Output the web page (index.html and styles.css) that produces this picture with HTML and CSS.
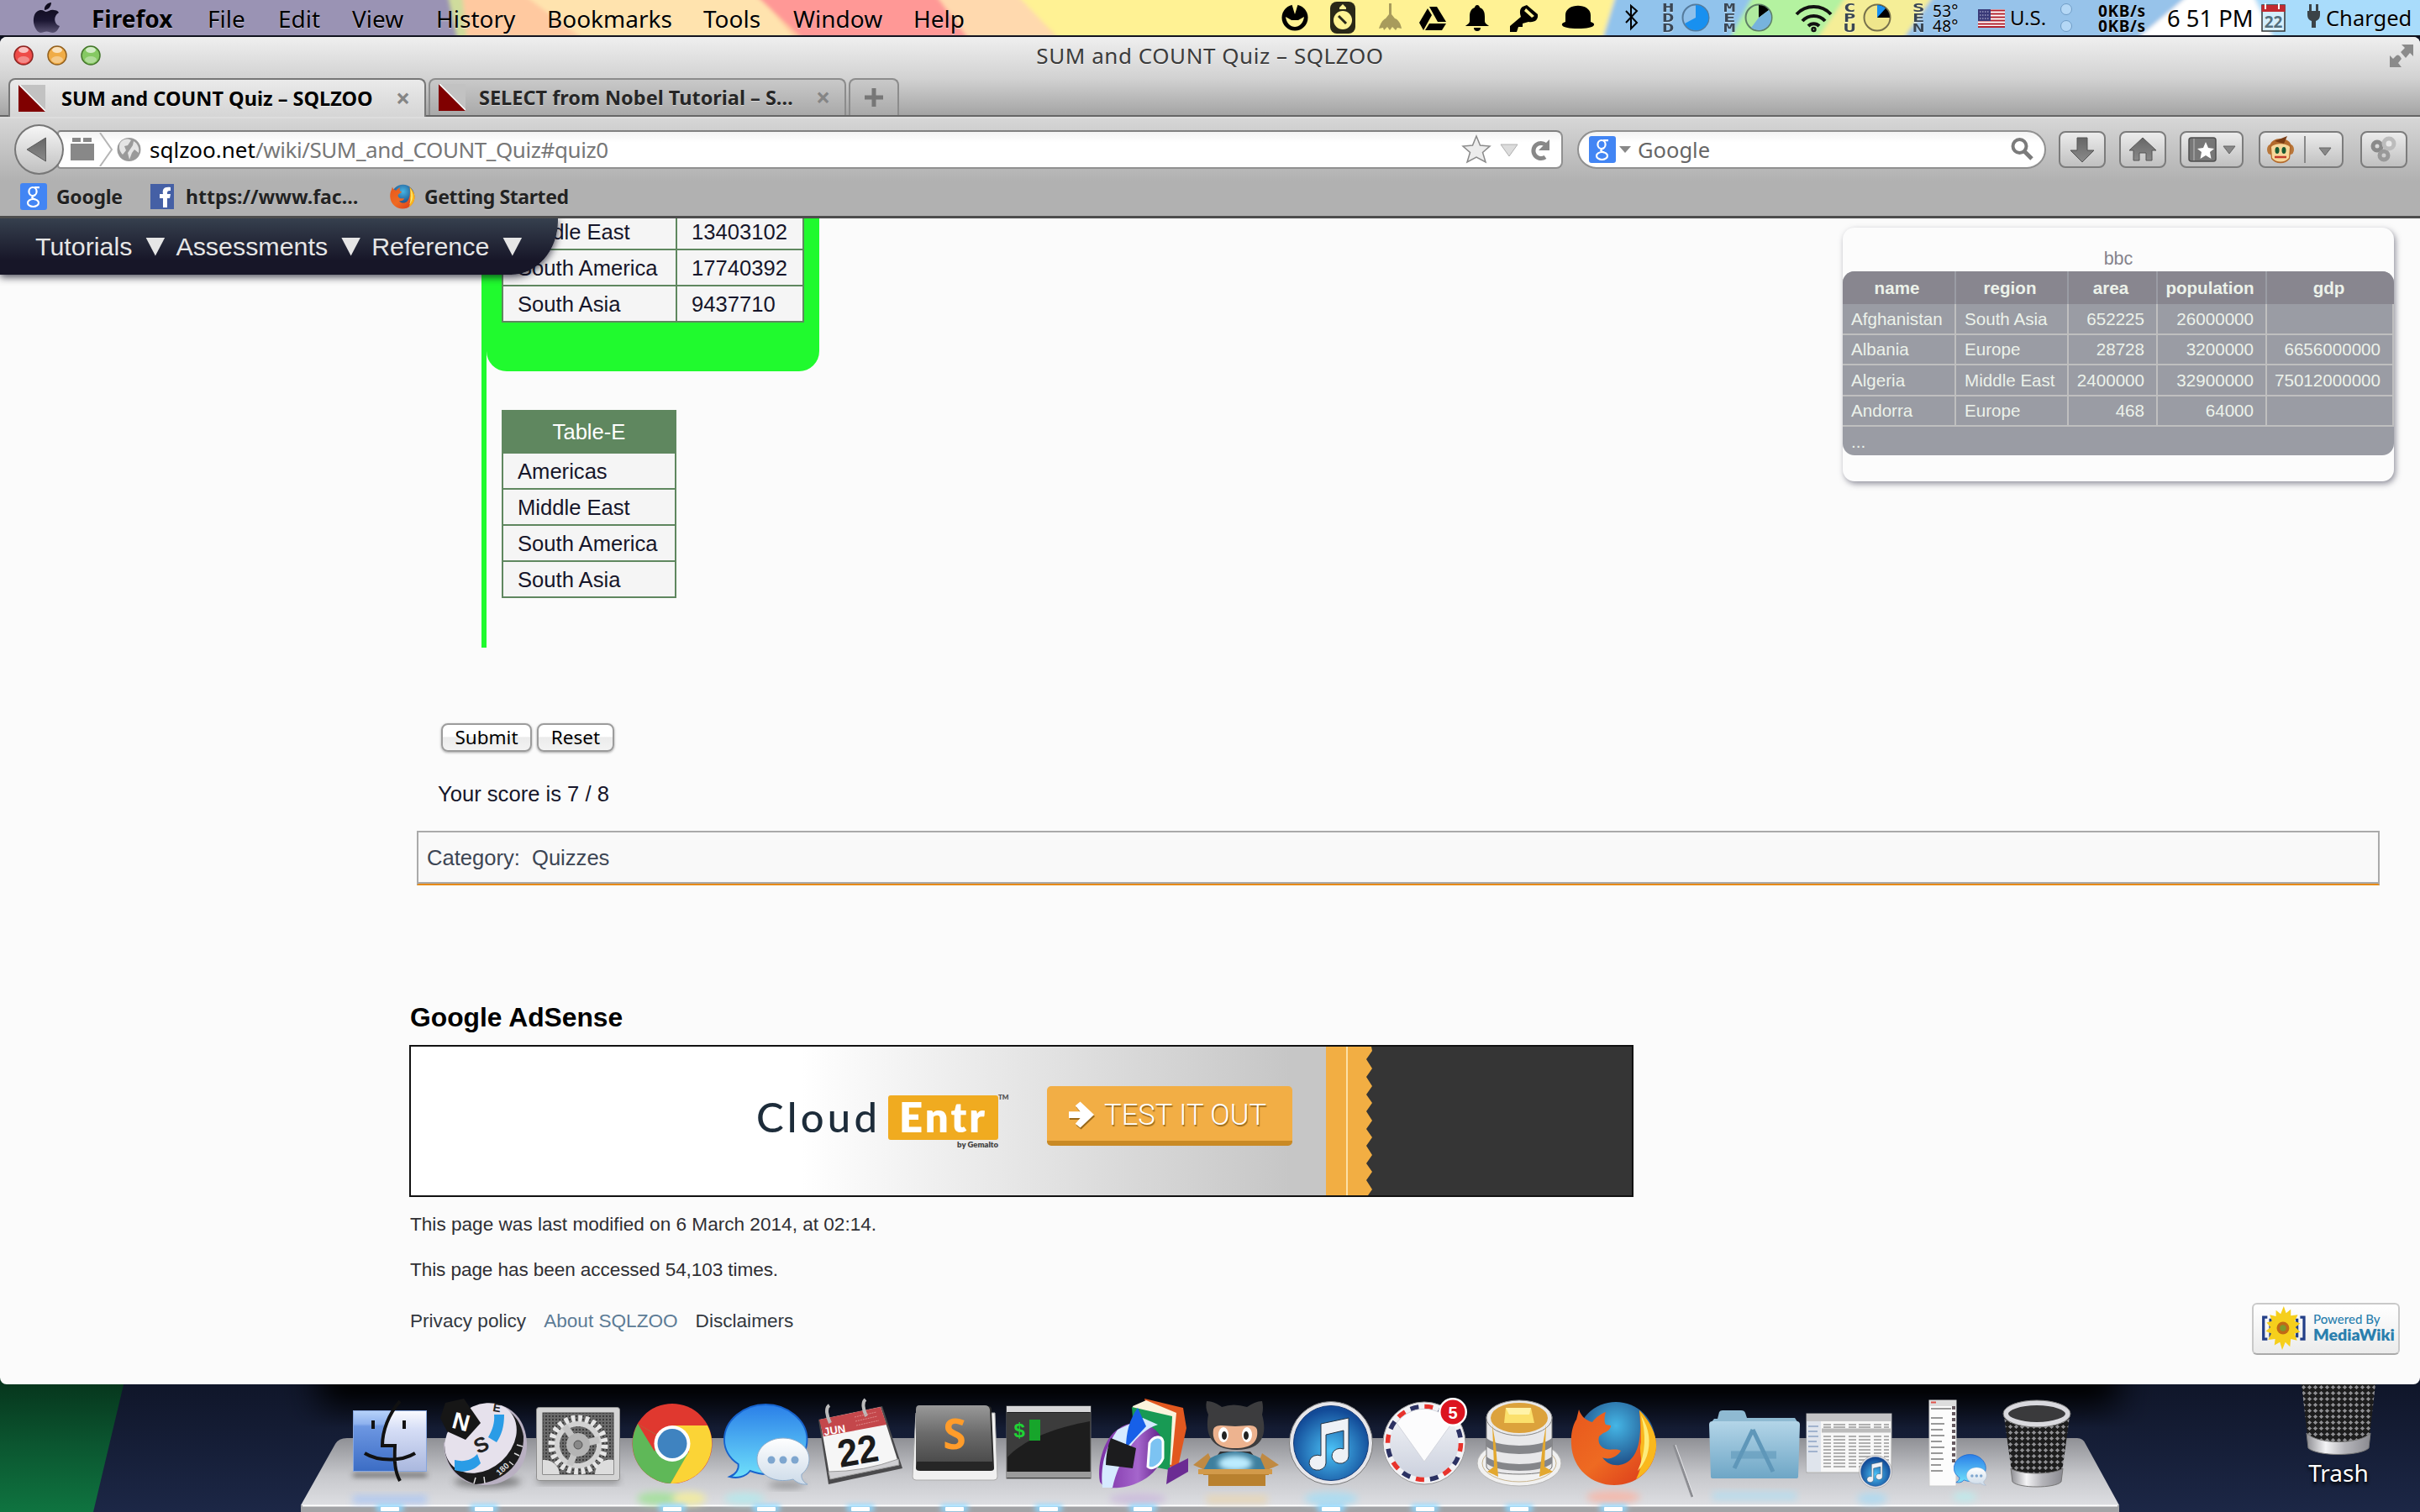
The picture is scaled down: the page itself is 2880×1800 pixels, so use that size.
FILE: index.html
```html
<!DOCTYPE html>
<html lang="en">
<head>
<meta charset="utf-8">
<title>SUM and COUNT Quiz – SQLZOO</title>
<link rel="stylesheet" href="styles.css">
</head>
<body>
<svg class="defs" width="0" height="0">
  <defs>
    <linearGradient id="silver" x1="0" y1="0" x2="1" y2="0"><stop offset="0" stop-color="#8d8d92"/><stop offset=".3" stop-color="#f4f4f6"/><stop offset=".6" stop-color="#b5b5ba"/><stop offset="1" stop-color="#8a8a90"/></linearGradient>
    <linearGradient id="grey" x1="0" y1="0" x2="0" y2="1"><stop offset="0" stop-color="#666"/><stop offset="1" stop-color="#8a8a8a"/></linearGradient>
    <linearGradient id="apple" x1="0" y1="0" x2="0" y2="1"><stop offset="0" stop-color="#0c0918"/><stop offset=".6" stop-color="#1c1733"/><stop offset="1" stop-color="#5b5474"/></linearGradient>
    <linearGradient id="finderL" x1="0" y1="0" x2="0" y2="1"><stop offset="0" stop-color="#b9d4fa"/><stop offset=".22" stop-color="#8fb2ee"/><stop offset=".26" stop-color="#6d97e2"/><stop offset="1" stop-color="#3b6cc4"/></linearGradient>
    <linearGradient id="finderR" x1="0" y1="0" x2="0" y2="1"><stop offset="0" stop-color="#fbfbff"/><stop offset=".3" stop-color="#d6def6"/><stop offset="1" stop-color="#a9b7de"/></linearGradient>
    <linearGradient id="bubble" x1="0" y1="0" x2="0" y2="1"><stop offset="0" stop-color="#2a7fe8"/><stop offset="1" stop-color="#6fe0fb"/></linearGradient>
    <linearGradient id="bubble2" x1="0" y1="0" x2="0" y2="1"><stop offset="0" stop-color="#fff"/><stop offset="1" stop-color="#cddbe9"/></linearGradient>
    <linearGradient id="letter" x1="0" y1="0" x2="0" y2="1"><stop offset="0" stop-color="#f4f5f8"/><stop offset="1" stop-color="#ccd1de"/></linearGradient>
    <radialGradient id="tunes" cx=".5" cy=".6" r=".55"><stop offset="0" stop-color="#4cc4f8"/><stop offset="1" stop-color="#124a97"/></radialGradient>
    <radialGradient id="foxblue" cx=".5" cy=".3" r=".7"><stop offset="0" stop-color="#45b6e6"/><stop offset="1" stop-color="#122a66"/></radialGradient>
    <linearGradient id="foxfur" x1="0" y1="0" x2="1" y2="1"><stop offset="0" stop-color="#e8571c"/><stop offset=".5" stop-color="#ee6a22"/><stop offset="1" stop-color="#d9361a"/></linearGradient>
    <linearGradient id="folder" x1="0" y1="0" x2="0" y2="1"><stop offset="0" stop-color="#b3d5e8"/><stop offset="1" stop-color="#6ea6c6"/></linearGradient>
    <linearGradient id="train" x1="0" y1="0" x2="1" y2="0"><stop offset="0" stop-color="#7b2fa5"/><stop offset=".6" stop-color="#a566cc"/><stop offset="1" stop-color="#5b1a83"/></linearGradient>
    <linearGradient id="sublime" x1="0" y1="0" x2="0" y2="1"><stop offset="0" stop-color="#999"/><stop offset=".5" stop-color="#6b6b6b"/><stop offset="1" stop-color="#4c4c4c"/></linearGradient>
    <pattern id="mesh" width="7" height="7" patternUnits="userSpaceOnUse"><rect width="7" height="7" fill="#1c1c1c"/><path d="M0 3.500L3.500 0L7 3.500L3.500 7Z" fill="#8f8f92" stroke="#1a1a1a" stroke-width="1.200"/></pattern>
    <pattern id="dots" width="4" height="4" patternUnits="userSpaceOnUse"><rect width="4" height="4" fill="#6b6b6b"/><circle cx="2" cy="2" r="1" fill="#2c2c2c"/></pattern>
    <filter id="soft" x="-50%" y="-50%" width="200%" height="200%"><feGaussianBlur stdDeviation="4"/></filter>
    <filter id="glow" x="-80%" y="-200%" width="260%" height="500%"><feGaussianBlur stdDeviation="3"/></filter>
    <filter id="melt"><feGaussianBlur stdDeviation="2.5"/></filter>
    <symbol id="lamp" viewBox="0 0 112 140"><rect x="40" y="131" width="32" height="9" fill="#8fd8ff" filter="url(#glow)"/><rect x="45" y="134" width="22" height="5" rx="1" fill="#fff"/></symbol>
    <symbol id="firefox" viewBox="0 0 104 102">
      <circle cx="54" cy="49" r="47" fill="url(#foxblue)"/>
      <path d="M82 12C98 28 105 48 101 62C97 84 78 101 52 101C26 101 2 82 1 52C0 38 4 27 7 23L10 11C13 20 19 24 26 26C30 20 38 15 42 14C40 20 40 26 42 29L48 30C48 34 45 37 39 39L34 43C32 51 36 56 42 58C48 60 54 57 60 60C56 67 46 72 38 68C46 80 62 80 72 70C84 58 84 34 82 12Z" fill="url(#foxfur)"/>
      <path d="M82 12C98 28 105 48 101 62C98 77 89 88 78 94C90 70 80 66 84 50C84 34 84 24 82 12Z" fill="#f9b81d"/>
      <path d="M84 18C94 34 96 50 91 66C88 74 84 80 80 84C90 62 90 40 84 18Z" fill="#fdec7a"/>
    </symbol>
    <symbol id="itunes" viewBox="0 0 100 102">
      <circle cx="50" cy="51" r="49.5" fill="#e6e6ea" stroke="#777" stroke-width="1"/>
      <circle cx="50" cy="51" r="44.5" fill="url(#tunes)" stroke="#173c78"/>
      <path d="M38 28L71 21V67a10 9 0 1 1-6-9V36L44 41V75a10 9 0 1 1-6-9Z" fill="#eef1f6" stroke="#234" stroke-width="1"/>
    </symbol>
    <symbol id="messages" viewBox="0 0 104 98">
      <path d="M54 1C82 1 107 20 107 43S82 84 54 84C46 84 40 82 34 80C28 88 16 89 8 87C16 84 20 78 19 72C7 65 1 54 1 43C1 20 26 1 54 1Z" transform="scale(.93 1)" fill="url(#bubble)" stroke="#1763cd" stroke-width="2"/>
      <path d="M71 41C88 41 102 52 102 66C102 74 98 80 93 84C92 90 96 94 100 96C92 97 86 93 83 90C60 96 40 84 40 66C40 52 54 41 71 41Z" fill="url(#bubble2)" stroke="#8eaccb" stroke-width="1"/>
      <circle cx="57" cy="67" r="4.5" fill="#7ea6cf"/><circle cx="71" cy="67" r="4.5" fill="#7ea6cf"/><circle cx="85" cy="67" r="4.5" fill="#7ea6cf"/>
    </symbol>
    <symbol id="goog" viewBox="0 0 32 32"><rect width="32" height="32" rx="3" fill="#4285f4"/><g fill="none" stroke="#fff" stroke-width="2.2"><ellipse cx="15" cy="10" rx="4.6" ry="5"/><path d="M17 5.200H23M18 14C12 17 14 18 18 19.500"/><ellipse cx="15.500" cy="23.500" rx="6.500" ry="4.500"/></g></symbol>
    <symbol id="sqlzoo" viewBox="0 0 32 32"><rect width="32" height="32" fill="#c2c2c2"/><path d="M0 0L32 32H0Z" fill="#800000"/><path d="M1 0L32 31" stroke="#fff" stroke-width="1.500"/></symbol>
  </defs>
</svg>

<header class="menubar">
  <svg class="menubar-wallpaper" viewBox="0 0 2880 44" preserveAspectRatio="none">
    <rect width="2880" height="44" fill="#9a93b4"/>
    <g filter="url(#melt)">
      <path d="M532 -9H570V53H545Z" fill="#cfdc9c"/>
      <path d="M550 -9H2880V53H556Z" fill="#ffc9a0"/>
      <path d="M620 -9H900L950 53H700Z" fill="#ffe3ae"/>
      <path d="M896 -9H1112L1156 53H960Z" fill="#ff9896"/>
      <path d="M1112 -9H1210L1262 53H1156Z" fill="#ffd9ae"/>
      <path d="M1208 -9H1926L1906 53H1264Z" fill="#fff294"/>
      <path d="M1924 -9H2090L2058 53H1906Z" fill="#91c3ec"/>
      <path d="M2088 -9H2200L2160 53H2056Z" fill="#b4f2a0"/>
      <path d="M2200 -9H2304L2262 53H2160Z" fill="#f5ee97"/>
      <path d="M2304 -9H2608L2538 53H2262Z" fill="#97c3ea"/>
      <path d="M2608 -9H2680L2708 53H2538Z" fill="#fff"/>
      <path d="M2680 -9H2900V53H2708Z" fill="#a9dcfb"/>
    </g>
  </svg>
  <svg class="apple" viewBox="0 0 110 44"><path fill="url(#apple)" d="M61 3C61 8 57 12 53 12C52 7 57 3 61 3ZM55 14C58 14 60 11 64 12C67 12 69 13 70 15C63 19 64 29 71 31C69 36 66 39 63 39C60 39 58 37.500 55.500 37.500C53 37.500 51 39 48 39C43 38 39 29 40 22C41 14 46 12 49 12C52 12 53 14 55 14Z"/></svg>
  <b>Firefox</b><span>File</span><span>Edit</span><span>View</span><span>History</span><span>Bookmarks</span><span>Tools</span><span>Window</span><span>Help</span>
  <svg viewBox="0 0 58 44"><circle cx="21" cy="21" r="15.500"/><path d="M17 4L21 17L25 4Z" fill="#fff294"/><path d="M10 20L17 24H25L32 20C31 28 26 32 21 32S11 28 10 20Z" fill="#fff294"/></svg>
  <svg viewBox="0 0 58 44"><rect x="5" y="2" width="30" height="38" rx="8" fill="#2a2818"/><circle cx="20" cy="24" r="11" fill="#fff294"/><path d="M16 9L20 5L24 9V11H16Z" fill="#fff294"/><path d="M15 19L24 28" stroke="#2a2818" stroke-width="3"/></svg>
  <svg viewBox="0 0 48 44" fill="#a89b5c"><path d="M17 4H20V17L24 22C28 23 31 28 32 34L27 33L25 36L21 32L18 36L15 32L11 36L10 33L5 34C7 28 9 24 13 22L17 17Z"/></svg>
  <svg viewBox="0 0 55 44"><path d="M17 8H26L37 26H27ZM15 10L20 18L10 36L5 27ZM17 28H37L32 36H12Z"/></svg>
  <svg viewBox="0 0 53 44"><path d="M19 6C21 6 22 8 22 9C27 11 28 15 28 20V25C28 28 31 29 33 31H5C7 29 10 28 10 25V20C10 15 11 11 16 9C16 8 17 6 19 6ZM15 33H23A4 4 0 0 1 15 33Z"/></svg>
  <svg viewBox="0 0 60 44"><path fill-rule="evenodd" d="M20 8L25 6L38 17C39 24 34 27 27 26L20 28V32L15 32L13 38H5V31L18 20C16 14 17 10 20 8ZM24 10L22 13L31 21L34 19Z"/></svg>
  <svg viewBox="0 0 78 44"><path d="M11 26V18C11 3 41 3 41 18V26C48 28 48 34 26 34S4 28 11 26Z"/></svg>
  <svg viewBox="0 0 48 44" fill="none" stroke="#000" stroke-width="2"><path d="M5 13L18 27L11 34V7L18 13L5 27"/></svg>
  <span class="stack">H<br>D<br>D</span>
  <svg viewBox="0 0 51 44"><circle cx="18" cy="21" r="15.500" fill="#8fc0ea" stroke="#557b9c" stroke-width="2"/><path d="M18 21V6A15 15 0 1 1 5 28Z" fill="#1890f0"/></svg>
  <span class="stack">M<br>E<br>M</span>
  <svg viewBox="0 0 59 44"><circle cx="18" cy="21" r="15.500" fill="#b0ea9f" stroke="#5e7e66" stroke-width="2"/><path d="M18 21V6A15 15 0 0 1 30 12Z"/><path d="M18 21L30 12A15 15 0 0 1 9 33Z" fill="#77b3dd"/></svg>
  <svg viewBox="0 0 60 44" fill="none" stroke="#111" stroke-width="4"><path d="M4 17A28 28 0 0 1 45 17M11 25A18 18 0 0 1 38 25M18 31A9 9 0 0 1 31 31"/><circle cx="24.500" cy="35" r="1.200"/></svg>
  <span class="stack">C<br>P<br>U</span>
  <svg viewBox="0 0 60 44"><circle cx="18" cy="21" r="15.500" fill="#efe68c" stroke="#77714c" stroke-width="2"/><path d="M18 21V6A15 15 0 0 1 33 21Z"/><path d="M18 21V6A15 15 0 0 1 28 10Z" fill="#1890f0"/></svg>
  <span class="stack">S<br>E<br>N</span>
  <span class="temps"><span>53°</span><span>48°</span></span>
  <svg viewBox="0 0 40 44"><rect x="2" y="11" width="32" height="22" fill="#fff"/><path d="M2 12.500H34M2 16.500H34M2 20.500H34M2 24.500H34M2 28.500H34M2 32H34" stroke="#b2222f" stroke-width="2"/><rect x="2" y="11" width="15" height="14" fill="#3a3a78"/><path d="M4 14H16M4 18H16M4 22H16" stroke="#c9c9e4" stroke-dasharray="1.500 1.500"/></svg>
  <span class="us">U.S.</span>
  <svg viewBox="0 0 46 44" fill="#b5d8f6" stroke="#6f9cc6"><circle cx="9" cy="11" r="6.500"/><circle cx="9" cy="31" r="6.500"/></svg>
  <b class="temps net"><span>0KB/s</span><span>0KB/s</span></b>
  <span class="clock">6 51 PM</span>
  <svg viewBox="0 0 53 44"><rect x="3" y="6" width="27" height="31" fill="#d3eefc" stroke="#333" stroke-width="1.500"/><rect x="2.500" y="6" width="28" height="8" fill="#c22a30"/><path d="M7 4V11M23 4V11" stroke="#fff" stroke-width="2"/><text x="16.500" y="33" text-anchor="middle" class="caltext">22</text></svg>
  <svg viewBox="0 0 25 44" fill="#3b4347"><path d="M6 5H9V13H14V5H17V13H19V17C19 22 17 24 14 25V33H9V25C6 24 4 22 4 17V13H6Z"/></svg>
  <span class="charged">Charged</span>
</header>

<main class="window">
  <div class="titlebar">
    <svg class="lights" viewBox="0 0 130 30"><g stroke-width="1.500"><circle cx="28" cy="15" r="11" fill="#ee4b48" stroke="#8c2522"/><circle cx="68" cy="15" r="11" fill="#f0ac46" stroke="#92601f"/><circle cx="108" cy="15" r="11" fill="#86c963" stroke="#44762b"/></g><g fill="#fff" opacity=".65"><ellipse cx="28" cy="8.500" rx="6" ry="3.500"/><ellipse cx="68" cy="8.500" rx="6" ry="3.500"/><ellipse cx="108" cy="8.500" rx="6" ry="3.500"/></g><g fill="#fff" opacity=".35"><ellipse cx="28" cy="20" rx="7" ry="4"/><ellipse cx="68" cy="20" rx="7" ry="4"/><ellipse cx="108" cy="20" rx="7" ry="4"/></g></svg>
    <div class="title">SUM and COUNT Quiz – SQLZOO</div>
    <svg class="expand" viewBox="0 0 130 30" fill="#8b8b8b"><path d="M108 1H122V15L118 11L113 17L107 10L112 5ZM94 28V14L98 18L102 14C105 12 107 16 108 18L104 23L108 28Z"/></svg>
  </div>
  <div class="tabs">
    <div class="tab active"><svg class="fav"><use href="#sqlzoo"/></svg><b>SUM and COUNT Quiz – SQLZOO</b><i>×</i></div>
    <div class="tab"><svg class="fav"><use href="#sqlzoo"/></svg><b>SELECT from Nobel Tutorial – S…</b><i>×</i></div>
    <div class="tab plus"><svg viewBox="0 0 22 22"><path d="M8.500 0h5v8.500h8.500v5h-8.500v8.500h-5v-8.500H0v-5h8.500Z" fill="#777"/></svg></div>
  </div>
  <div class="toolbar">
    <div class="back"><svg viewBox="0 0 60 60"><path d="M14 30L38 15V45Z" fill="url(#grey)" stroke="#555"/></svg></div>
    <div class="urlbar">
      <svg class="idbox" viewBox="0 0 96 40"><path d="M6 13H34V33H6ZM8 6H18V11H8ZM21 6H31V11H21Z" fill="#888"/><path d="M41 0L55 20L41 40" fill="none" stroke="#b5b5b5" stroke-width="2"/><circle cx="75.500" cy="20" r="14" fill="#9a9a9a"/><path d="M65 12C69 6 76 7 78 9L74 15L70 16L72 21L68 26C64 22 63 17 65 12ZM81 10C86 13 88 18 87 24L82 20L79 24L76 32L74 24L80 15Z" fill="#e4e4e4"/></svg>
      <span class="url"><em>sqlzoo.net</em>/wiki/SUM_and_COUNT_Quiz#quiz0</span>
      <svg class="urlicons" viewBox="0 0 130 40"><path d="M29 4L33.500 15L45 16L36.500 23.500L40 35L29 29L18 35L21.500 23.500L13 16L24.500 15Z" fill="#ececec" stroke="#8a8a8a" stroke-width="1.500"/><path d="M58 14H78L68 28Z" fill="#dcdcdc" stroke="#b0b0b0"/><path d="M113 16A9 9 0 1 0 111 29" fill="none" stroke="#888" stroke-width="5"/><path d="M116 8V21H103Z" fill="#888"/></svg>
    </div>
    <div class="search"><svg class="g32"><use href="#goog"/></svg><svg class="tri" viewBox="0 0 14 8"><path d="M0 0H14L7 8Z" fill="#888"/></svg><span>Google</span><svg class="mag" viewBox="0 0 28 28"><circle cx="10.500" cy="10" r="8" fill="none" stroke="#7b7b7b" stroke-width="4"/><path d="M16 16L25 25" stroke="#7b7b7b" stroke-width="5"/></svg></div>
    <div class="tool"><svg viewBox="0 0 56 44"><path d="M22 8H34V23H42L28 37L14 23H22Z" fill="url(#grey)" stroke="#555"/></svg></div>
    <div class="tool"><svg viewBox="0 0 56 44"><path d="M28 8L44 23H39V35H32V26H24V35H17V23H12Z" fill="url(#grey)" stroke="#555"/></svg></div>
    <div class="tool book"><svg viewBox="0 0 76 44"><rect x="11" y="8" width="32" height="28" rx="3" fill="#777" stroke="#4f4f4f" stroke-width="1.500"/><path d="M17 9V35" stroke="#999" stroke-width="2"/><path d="M31 13L34 20L41 21L36 25L37.500 33L31 29L24.500 33L26 25L21 21L28 20Z" fill="#fff"/><path d="M52 18H66L59 27Z" fill="#888" stroke="#666"/></svg></div>
    <div class="tool monkey"><svg viewBox="0 0 101 44"><ellipse cx="14" cy="22" rx="4" ry="6" fill="#b9773a"/><ellipse cx="38" cy="22" rx="4" ry="6" fill="#b9773a"/><path d="M13 18C15 6 37 6 39 18L37 33C32 40 20 40 15 33Z" fill="#b36a2c"/><path d="M15 19C19 14 33 14 37 19L36 32C31 38 21 38 16 32Z" fill="#f7d79a"/><path d="M19 12L34 6L30 15Z" fill="#7a3c14"/><ellipse cx="22" cy="23" rx="2.500" ry="4" fill="#195a32"/><ellipse cx="30" cy="23" rx="2.500" ry="4" fill="#195a32"/><path d="M19 31H33" stroke="#c43c2c" stroke-width="2.500"/><path d="M55 6V38" stroke="#888" stroke-width="2"/><path d="M72 20H86L79 29Z" fill="#888" stroke="#666"/></svg></div>
    <div class="tool last"><svg viewBox="0 0 56 44"><g fill="none" stroke-width="5"><circle cx="20" cy="18" r="5" stroke="#8a8a8a"/><circle cx="28" cy="29" r="5" stroke="#999"/><circle cx="34" cy="15" r="6" stroke="#bcbcbc" fill="#e8e8e8"/></g></svg></div>
  </div>
  <div class="bookmarks">
    <svg class="g32"><use href="#goog"/></svg><b class="bk1">Google</b>
    <svg class="fb" viewBox="0 0 28 30"><rect width="28" height="30" fill="#4560a5"/><path d="M15 28V17H11V12H15C14 6 16 3 24 4V8C20 8 20 9 20 12H24L23 17H20V28Z" fill="#fff"/></svg><b class="bk2">https://www.fac…</b>
    <svg class="ffx"><use href="#firefox"/></svg><b class="bk3">Getting Started</b>
  </div>

  <section class="page">
    <nav class="sitenav"><span>Tutorials</span><i></i><span>Assessments</span><i></i><span>Reference</span><i></i></nav>
    <aside class="card">
      <div class="caption">bbc</div>
      <table>
        <colgroup><col class="c1"><col class="c2"><col class="c3"><col class="c4"><col class="c5"></colgroup>
        <tr><th>name</th><th>region</th><th>area</th><th>population</th><th>gdp</th></tr>
        <tr><td>Afghanistan</td><td>South Asia</td><td class="n">652225</td><td class="n">26000000</td><td></td></tr>
        <tr><td>Albania</td><td>Europe</td><td class="n">28728</td><td class="n">3200000</td><td class="n">6656000000</td></tr>
        <tr><td>Algeria</td><td>Middle East</td><td class="n">2400000</td><td class="n">32900000</td><td class="n">75012000000</td></tr>
        <tr><td>Andorra</td><td>Europe</td><td class="n">468</td><td class="n">64000</td><td></td></tr>
        <tr><td colspan="5" class="more">...</td></tr>
      </table>
    </aside>
    <div class="answers">
      <div class="chosen">
        <table class="result two">
          <tr><td>Middle East</td><td>13403102</td></tr>
          <tr><td>South America</td><td>17740392</td></tr>
          <tr><td>South Asia</td><td>9437710</td></tr>
        </table>
      </div>
      <table class="result one">
        <tr><th>Table-E</th></tr>
        <tr><td>Americas</td></tr>
        <tr><td>Middle East</td></tr>
        <tr><td>South America</td></tr>
        <tr><td>South Asia</td></tr>
      </table>
    </div>
    <div class="buttons"><button class="submit">Submit</button><button class="reset">Reset</button></div>
    <p class="score">Your score is 7 / 8</p>
    <div class="category"><span>Category:</span><span>Quizzes</span></div>
    <footer class="foot">
      <h2>Google AdSense</h2>
      <div class="ad">
        <div class="brand"><span class="cloud">Cloud</span><span class="entr">Entr<small class="tm">TM</small><small class="by">by Gemalto</small></span></div>
        <div class="cta"><svg viewBox="0 0 32 32"><path d="M0 12H14L8 5L14 0L31 16L14 32L8 27L14 20H0Z" fill="#fff"/></svg><span>TEST IT OUT</span></div>
        <svg class="ribbon" viewBox="0 0 60 177"><rect x="40" width="20" height="177" fill="#353535"/><path d="M0 0H54L55 5L48 15L55 26L48 36L55 47L48 57L55 67L48 77L55 88L48 98L55 108L48 118L55 129L48 139L55 149L48 159L55 170L50 177H0Z" fill="#f2ae43"/><path d="M25 0V177" stroke="#fff0c8" stroke-width="1.500"/></svg>
        <div class="dark"></div>
      </div>
      <p class="f1">This page was last modified on 6 March 2014, at 02:14.</p>
      <p class="f2">This page has been accessed 54,103 times.</p>
      <div class="links"><a>Privacy policy</a><a class="about">About SQLZOO</a><a>Disclaimers</a></div>
    </footer>
    <div class="mw"><svg viewBox="0 0 60 56"><path d="M11 14H6V42H11M53 14H58V42H53M15 16V40M49 16V40" fill="none" stroke="#233f88" stroke-width="3.500"/><path d="M32 0L35 9L41 4L41 12L50 11L46 19L53 22L47 27L53 33L46 35L49 44L41 42L40 52L34 46L30 56L27 46L20 50L21 42L12 43L16 35L9 32L15 27L10 21L17 19L14 11L22 13L22 5L28 10Z" fill="#f6cf1c"/><circle cx="31" cy="28" r="8" fill="#c06a16"/><circle cx="31" cy="28" r="4" fill="#7d9a2c"/></svg><div><span>Powered By</span><b>MediaWiki</b></div></div>
  </section>
</main>

<section class="desktop">
  <svg class="backdrop" viewBox="0 0 2880 160" preserveAspectRatio="none">
    <defs><linearGradient id="navy" x1="0" y1="0" x2="0" y2="1"><stop offset="0" stop-color="#0f1528"/><stop offset="1" stop-color="#1c2746"/></linearGradient><linearGradient id="green" x1="0" y1="0" x2="0" y2="1"><stop offset="0" stop-color="#06331b"/><stop offset=".5" stop-color="#0b5630"/><stop offset="1" stop-color="#0f7440"/></linearGradient>
    <linearGradient id="shade" x1="0" y1="0" x2="0" y2="1"><stop offset="0" stop-color="#020305"/><stop offset=".3" stop-color="#020305" stop-opacity=".85"/><stop offset="1" stop-color="#020305" stop-opacity="0"/></linearGradient>
    <linearGradient id="shelf" x1="0" y1="0" x2="0" y2="1"><stop offset="0" stop-color="#8f9095"/><stop offset=".5" stop-color="#c6c7cb"/><stop offset="1" stop-color="#e3e4e8"/></linearGradient>
    <filter id="wide" x="-5%" y="-100%" width="110%" height="300%"><feGaussianBlur stdDeviation="20 1"/></filter></defs>
    <rect width="2880" height="160" fill="url(#navy)"/>
    <path d="M0 0H149L111 160H0Z" fill="url(#green)"/>
    <path d="M380 0H2520V60H380Z" fill="url(#shade)" filter="url(#wide)"/>
    <path d="M413 72H2472Q2479 72 2482 79L2522 152V160H358V152L399 79Q403 72 413 72Z" fill="url(#shelf)"/>
    <path d="M358 152H2522V160H358Z" fill="#a2a3a6"/><path d="M360 152.500H2520" stroke="#fff" stroke-width="2"/>
  </svg>
  <div class="dock">
    <svg viewBox="0 0 112 140"><rect x="12" y="120" width="88" height="10" fill="#a9c4f4" opacity=".8" filter="url(#soft)"/><rect x="12" y="94" width="88" height="4" fill="#555" filter="url(#glow)"/><rect x="12" y="19" width="88" height="73" fill="url(#finderR)"/><path d="M12 19H62C52 32 47 48 47 61H60C59 72 60 84 62 92H12Z" fill="url(#finderL)"/><rect x="12.500" y="19.500" width="87" height="72" fill="none" stroke="#86a6df"/><path d="M68 8C54 24 47 44 47 61H62C61 80 62 92 68 103M26 70C42 80 70 80 86 70M36 31V41M73 31V41" fill="none" stroke="#111" stroke-width="4"/><use href="#lamp"/></svg>
    <svg viewBox="0 0 112 140"><ellipse cx="60" cy="104" rx="40" ry="7" fill="#333" opacity=".5" filter="url(#soft)"/><path d="M60 11C90 10 106 32 107 58C108 90 84 108 56 108C26 108 8 86 8 58Z" fill="#b9b0c2"/><path d="M64 12C86 14 100 30 103 50C104 78 84 104 46 107C24 100 10 84 9 62Z" fill="#1b1b1c"/><ellipse cx="52" cy="52" rx="47" ry="37" transform="rotate(-42 52 52)" fill="#e6e1ec"/><path d="M68 24H80C80 38 77 48 71 57L61 51C66 42 69 34 68 24ZM21 78C32 81 42 78 48 71L52 82C44 91 32 94 21 90Z" fill="#2a9ce6"/><path d="M4 28L10 10L32 5L52 34L34 54L12 44Z" fill="#161616"/><text x="18" y="41" transform="rotate(15 24 34)" class="cN">N</text><text x="45" y="70" transform="rotate(-25 50 62)" class="cS">S</text><text x="66" y="20" class="cE" transform="rotate(10 68 20)">E</text><path d="M86 80L91 84M92 70L98 73M95 60L102 62M56 98L57 106M46 99L44 106" stroke="#ddd" stroke-width="1.500"/><text x="70" y="94" class="cn" transform="rotate(-42 76 90)">180</text><use href="#lamp"/></svg>
    <svg viewBox="0 0 112 140"><rect x="8" y="98" width="96" height="8" fill="#444" opacity=".5" filter="url(#soft)"/><rect x="6.500" y="15.500" width="99" height="87" rx="3" fill="#d4d4d4" stroke="#8e8e8e"/><rect x="14" y="22" width="84" height="73" fill="url(#dots)" stroke="#444"/><circle cx="56" cy="60" r="31" fill="none" stroke="#e6e6e6" stroke-width="9" stroke-dasharray="4.500 3.615"/><circle cx="56" cy="60" r="25" fill="none" stroke="#d2d2d2" stroke-width="6"/><path d="M56 60L40 38M56 60L81 54M56 60L46 84" stroke="#c4c4c4" stroke-width="8"/><circle cx="56" cy="60" r="14" fill="#b4b4b4"/><circle cx="56" cy="60" r="5" fill="#888" stroke="#555"/><path d="M14 95V78A18 18 0 0 1 34 95ZM98 95V78A18 18 0 0 0 76 95Z" fill="#ddd"/></svg>
    <svg viewBox="0 0 112 140"><ellipse cx="40" cy="124" rx="26" ry="8" fill="#a9dfa2" filter="url(#soft)"/><ellipse cx="76" cy="124" rx="20" ry="8" fill="#f0eaa4" filter="url(#soft)"/><circle cx="56" cy="58.500" r="47.500" fill="#e0382f"/><path d="M15 35A47.500 47.500 0 0 0 54 106L76 70L56 59Z" fill="#5fb858"/><path d="M56 37H98A47.500 47.500 0 0 1 54 106L76 68Z" fill="#fbd436"/><path d="M15 35L35 68L40 50Z" fill="#e0382f"/><circle cx="56" cy="58.500" r="21.500" fill="#fff"/><circle cx="56" cy="58.500" r="17.500" fill="#3f83c0"/><use href="#lamp"/></svg>
    <svg viewBox="0 0 112 140"><ellipse cx="30" cy="124" rx="24" ry="7" fill="#b9e6ea" filter="url(#soft)"/><ellipse cx="80" cy="108" rx="22" ry="4" fill="#555" opacity=".5" filter="url(#soft)"/><use href="#messages" x="5" y="11" width="104" height="98"/><use href="#lamp"/></svg>
    <svg viewBox="0 0 112 140"><path d="M6 30L82 14L106 88L18 107Z" fill="#4a4a4c"/><path d="M8 30L80 15L102 84L20 101Z" fill="#f6f6f6"/><path d="M20 101L102 84L101 77Q60 92 18 92Z" fill="#cfcfd2" stroke="#999"/><path d="M7 30L80 15L87 36L12 50Z" fill="#c4474b"/><text x="13" y="49" class="jun" transform="rotate(-9 13 49)">JUN</text><text x="32" y="87" class="day" transform="rotate(-10 32 87)" textLength="48" lengthAdjust="spacingAndGlyphs">22</text><path d="M20 34C16 26 14 16 19 13M63 26C59 18 58 9 62 6" fill="none" stroke="#bbb" stroke-width="4"/><path d="M49 27L75 21M50 32L76 26M51 37L78 31" stroke="#e08a8a" stroke-dasharray="2 1"/><use href="#lamp"/></svg>
    <svg viewBox="0 0 112 140"><path d="M10 22H104L107 98Q107 102 103 102H10Q6 102 6 98Z" fill="#f1f1f1" stroke="#aaa"/><path d="M12 14H96Q100 14 100 18L103 88Q103 91 99 91H15Q10 91 10 88Z" fill="#262626"/><path d="M14 13H92Q97 13 98 18L101 80H10V18Q10 13 14 13Z" fill="url(#sublime)"/><text x="56" y="65" text-anchor="middle" class="subl">S</text><use href="#lamp"/></svg>
    <svg viewBox="0 0 112 140"><rect x="6" y="14" width="100" height="86" fill="#1d1d1d" stroke="#666"/><rect x="6" y="14" width="100" height="7" fill="#d7d7d9"/><path d="M105 22V32C50 42 20 60 6 76V22Z" fill="#3c3c3c"/><rect x="6" y="92" width="100" height="7" fill="#9b9b9b"/><text x="14" y="51" class="term">$</text><rect x="33" y="30" width="13" height="25" fill="#17a52b"/><use href="#lamp"/></svg>
    <svg viewBox="0 0 112 140"><ellipse cx="50" cy="124" rx="34" ry="7" fill="#cdbfdc" filter="url(#soft)"/><path d="M58 5L104 16L108 40L98 86H80Z" fill="#e2581f"/><path d="M44 14L60 7L96 22L90 84L50 74Z" fill="#fbf3dc"/><path d="M43 15L91 26L88 90L48 82Z" fill="#189a54"/><path d="M86 88L110 76V92L84 107Z" fill="#6b2b93"/><path d="M5 104C1 80 12 50 26 42C42 28 72 32 80 56C86 84 60 108 28 111C16 112 8 110 5 104Z" fill="url(#train)"/><path d="M26 42L56 28L74 36C48 44 28 76 20 111H8C5 80 14 60 26 42Z" fill="#d6eaff"/><path d="M50 16L60 38L36 64C36 46 40 30 50 16Z" fill="#1760e8"/><path d="M18 52L48 64L44 88L12 84C12 74 14 62 18 52Z" fill="#1c1c1e"/><path d="M64 58C68 50 78 48 80 56V76C76 86 66 90 62 86Z" fill="#7cc3f2" stroke="#fff" stroke-width="3"/><use href="#lamp"/></svg>
    <svg viewBox="0 0 112 140"><rect x="20" y="120" width="72" height="10" fill="#e6d6b8" filter="url(#soft)"/><path d="M20 8C28 8 34 12 38 15Q52 10 68 15C74 11 80 8 86 8Q88 16 86 24C92 46 88 66 56 66S18 46 22 24Q18 16 20 8Z" fill="#3c3c3e"/><path d="M28 42C30 34 44 38 54 38S78 34 80 42C82 56 74 64 54 64S26 56 28 42Z" fill="#edb38f"/><ellipse cx="40" cy="48" rx="6" ry="9" fill="#fff"/><ellipse cx="68" cy="48" rx="6" ry="9" fill="#fff"/><ellipse cx="41" cy="49" rx="3" ry="5" fill="#222"/><ellipse cx="67" cy="49" rx="3" ry="5" fill="#222"/><path d="M36 68H72L82 80L66 84H40L26 82Z" fill="#2e2e30"/><path d="M22 70L4 84L18 90L32 92ZM86 70L106 84L92 90L78 92Z" fill="#c08a43"/><path d="M24 76Q54 60 84 76L90 90H16Z" fill="#3e7f9e"/><ellipse cx="54" cy="82" rx="20" ry="9" fill="#bcecff" filter="url(#glow)"/><path d="M16 90H94V96H90V109H22V96H16Z" fill="#b9812f"/><path d="M10 89H98V95H10Z" fill="#d29a4a"/></svg>
    <svg viewBox="0 0 112 140"><ellipse cx="56" cy="124" rx="32" ry="8" fill="#aedcf0" filter="url(#soft)"/><use href="#itunes" x="6" y="7" width="100" height="102"/><use href="#lamp"/></svg>
    <svg viewBox="0 0 112 140"><circle cx="55" cy="58" r="49" fill="#f2f2f5" stroke="#999"/><circle cx="55" cy="58" r="41" fill="url(#letter)"/><circle cx="55" cy="58" r="43.500" fill="none" stroke="#e8332c" stroke-width="5.500" stroke-dasharray="10 24.160"/><circle cx="55" cy="58" r="43.500" fill="none" stroke="#2b3162" stroke-width="5.500" stroke-dasharray="10 24.160" stroke-dashoffset="17"/><path d="M22 34L55 80L88 34A41 41 0 0 0 22 34Z" fill="#fcfcfd" stroke="#d3d5dd"/><circle cx="89" cy="21" r="17" fill="#fff"/><circle cx="89" cy="21" r="14.500" fill="#dc1420"/><text x="89" y="28.500" text-anchor="middle" class="badge">5</text><use href="#lamp"/></svg>
    <svg viewBox="0 0 112 140"><ellipse cx="56" cy="82" rx="50" ry="27" fill="#f1f1f1" stroke="#b5b5b5"/><ellipse cx="56" cy="82" rx="44" ry="22" fill="none" stroke="#c9b48c"/><path d="M17 26V86C17 98 95 98 95 86V26Z" fill="#e8e8ea" stroke="#777"/><path d="M17 52C30 64 82 64 95 52V62C82 74 30 74 17 62ZM17 74C30 86 82 86 95 74V82C82 94 30 94 17 82Z" fill="#85868a"/><ellipse cx="56" cy="28" rx="39" ry="21" fill="#e9e9ea" stroke="#888"/><ellipse cx="56" cy="28" rx="34" ry="18" fill="#dca23c"/><path d="M24 36L28 60L31 98L18 92L26 86ZM88 36L84 60L80 98L96 92L86 86Z" fill="#e3a82f"/><path d="M40 16H70L74 34H38Z" fill="#fbe06c"/><path d="M40 16H70L68 24H44Z" fill="#fff3a8"/><use href="#lamp"/></svg>
    <svg viewBox="0 0 112 140"><ellipse cx="56" cy="122" rx="32" ry="8" fill="#f2bcb0" filter="url(#soft)"/><use href="#firefox" x="5" y="7" width="104" height="102"/><use href="#lamp"/></svg>
    <svg class="sep" viewBox="0 0 56 140"><path d="M16 60L38 122" stroke="#8d8e93" stroke-width="3"/><path d="M18 60L40 122" stroke="#e2e3e6" stroke-width="1"/></svg>
    <svg viewBox="0 0 112 140"><rect x="6" y="116" width="100" height="10" fill="#b9dcec" filter="url(#soft)"/><path d="M4 34L8 29H12L14 21Q15 19 18 19H40Q44 19 45 22L47 28H104L108 34Z" fill="#8fbad2"/><path d="M2 36Q2 32 6 32H106Q110 32 110 36L108 98Q108 100 105 100H7Q4 100 4 98Z" fill="url(#folder)"/><g fill="none" stroke="#5f97b9" stroke-width="5"><path d="M54 42L32 88M54 42L78 92"/><path d="M28 72H82" stroke-width="9" opacity=".6"/></g></svg>
    <svg viewBox="0 0 112 140"><rect x="6" y="23" width="101" height="70" fill="#f7f7f7" stroke="#aaa"/><rect x="6" y="23" width="101" height="9" fill="#c3c3c5"/><rect x="6" y="32" width="17" height="60" fill="#dfe4ec"/><g stroke="#999" stroke-width="1.500" stroke-dasharray="9 3 14 4"><path d="M26 36H104M26 39H104M26 50H104M26 54H104M26 58H104M26 62H104M26 66H104M26 70H104M26 74H104M26 78H104M26 82H104M26 86H104"/></g><path d="M24 43H106" stroke="#bbb" stroke-width="5"/><path d="M8 38H20M8 44H19M8 50H20M8 56H18M8 62H20M8 68H19" stroke="#8da3c4" stroke-width="1.500"/><ellipse cx="84" cy="124" rx="18" ry="7" fill="#b2d9ee" filter="url(#soft)"/><use href="#itunes" x="68" y="72" width="40" height="40"/></svg>
    <svg viewBox="0 0 112 140"><rect x="40" y="7" width="32" height="102" fill="#fcfcfc" stroke="#ccc"/><rect x="40" y="7" width="32" height="7" fill="#ddd"/><path d="M42 17H66M42 28H56M42 35H58M42 42H56M42 49H58M42 56H55M42 63H58M42 70H56M42 77H57M42 84H54M42 91H56" stroke="#999" stroke-width="2"/><path d="M69 14V84" stroke="#665a60" stroke-width="4" stroke-dasharray="4 3"/><path d="M42 9.500H48" stroke="#e0524a" stroke-width="2"/><ellipse cx="82" cy="122" rx="14" ry="6" fill="#c0e8ea" filter="url(#soft)"/><use href="#messages" x="69" y="70" width="40" height="40"/></svg>
    <svg viewBox="0 0 112 140"><path d="M17 26L27 100C30 112 82 112 85 100L95 26Z" fill="url(#mesh)"/><path d="M25 88C36 96 76 96 87 88L85 104C78 112 34 112 27 104Z" fill="url(#silver)" stroke="#777"/><ellipse cx="56" cy="23" rx="37" ry="13" fill="#3a3a3c" stroke="#d9d9de" stroke-width="6"/><ellipse cx="56" cy="23" rx="40" ry="16" fill="none" stroke="#777"/></svg>
  </div>
  <div class="trash"><svg viewBox="0 0 90 86"><path d="M1 0H89L81 70H9Z" fill="url(#mesh)"/><path d="M7 58C20 72 70 72 83 58L81 76C70 86 20 86 9 76Z" fill="url(#silver)" stroke="#777"/></svg><span>Trash</span></div>
</section>
</body>
</html>
```
FILE: styles.css
```css
* { box-sizing: border-box; }
body { margin: 0; width: 2880px; height: 1800px; overflow: hidden; display: flex; flex-direction: column; background: #0c1020; font-family: "Noto Sans", sans-serif; }
svg { display: block; }
.defs { position: absolute; }
p, h2 { margin: 0; }
i, em { font-style: normal; }

/* menu bar */
.menubar { position: relative; height: 44px; flex: none; display: grid; grid-template-columns: 110px 137px 84px 88px 100px 132px 186px 107px 143px 433px 58px 58px 48px 55px 53px 60px 78px 48px 22px 51px 24px 59px 60px 22px 60px 24px 52px 40px 58px 46px 82px 111px 53px 25px 113px; font-size: 28px; line-height: 44px; color: #000; white-space: nowrap; border-bottom: 2px solid rgba(20, 20, 30, .6); text-shadow: 0 1px 1px rgba(255, 255, 255, .5); }
.menubar > * { height: 44px; position: relative; }
.menubar > b { margin-left: -1px; }
.menubar > svg { width: 100%; }
.menubar > .menubar-wallpaper { position: absolute; left: 0; top: 0; width: 2880px; height: 42px; }
.stack { font: bold 14.500px/12px "DejaVu Sans Mono", monospace; transform: scaleX(1.65); transform-origin: 0 0; padding-top: 3px; color: #3a4654; }
.temps { display: flex; flex-direction: column; padding-top: 4px; font-size: 19px; line-height: 18px; letter-spacing: .3px; }
.temps span { height: 18px; }
.net { font-size: 19px; letter-spacing: .6px; padding-left: 2px; }
.us { font-size: 24px; line-height: 42px; }
.clock { font-size: 27.400px; padding-left: 1px; }
.charged { font-size: 25.500px; padding-left: 1px; line-height: 42px; }
.caltext { font: bold 19px "Noto Sans", sans-serif; fill: #54707e; }

/* window */
.window { height: 1604px; flex: none; border-radius: 8px; overflow: hidden; background: #fbfbfb; display: flex; flex-direction: column; position: relative; z-index: 1; }
.titlebar { height: 49px; flex: none; display: flex; justify-content: space-between; background: linear-gradient(#efefef, #d2d2d2); }
.lights { width: 130px; height: 30px; margin-top: 7px; }
.expand { width: 130px; height: 30px; margin-top: 8px; }
.title { font-size: 26px; letter-spacing: .55px; line-height: 45px; color: #3b3b3b; text-shadow: 0 1px 0 rgba(255, 255, 255, .6); }
.tabs { height: 46px; flex: none; display: flex; gap: 3px; padding-left: 10px; background: linear-gradient(#d2d2d2, #a4a4a4); border-bottom: 2px solid #666; }
.tab { height: 44px; width: 497px; border: 2px solid #8c8c8c; border-bottom: 0; border-radius: 8px 8px 0 0; background: linear-gradient(#c9c9c9, #a9a9a9); display: flex; align-items: center; padding-left: 10px; font-size: 23.5px; color: #262626; }
.tab.active { background: linear-gradient(#eaeaea, #d5d5d5); border-color: #777; height: 46px; color: #000; }
.tab b { width: 417px; padding-left: 16px; white-space: nowrap; line-height: 42px; text-shadow: 0 1px 0 rgba(255, 255, 255, .5); }
.tab.active b { padding-left: 19px; }
.tab i { color: #858585; font: bold 30px/40px "Noto Sans", sans-serif; }
.tab.plus { width: 60px; padding-left: 17px; }
.tab.plus svg { width: 22px; height: 22px; }
.fav { width: 32px; height: 32px; flex: none; }
.toolbar { height: 76px; flex: none; display: flex; align-items: center; padding: 0 0 1px 17px; background: linear-gradient(#d6d6d6, #b1b1b1); border-top: 2px solid #ddd; }
.back { width: 59px; height: 60px; border-radius: 50%; border: 2px solid #777; background: linear-gradient(#f6f6f6, #c0c0c0); position: relative; z-index: 1; overflow: hidden; flex: none; }
.back svg { width: 56px; height: 56px; }
.urlbar { width: 1792px; height: 46px; margin-left: -8px; border: 2px solid #909090; border-top-color: #808080; border-radius: 4px 8px 8px 4px; background: linear-gradient(#f3f3f3, #fff 30%); display: flex; align-items: center; flex: none; padding-left: 8px; font-size: 26px; }
.idbox { width: 96px; height: 40px; }
.url { flex: 1; color: #777; padding-left: 4px; line-height: 40px; letter-spacing: -.43px; }
.url em { color: #000; letter-spacing: 0; }
.urlicons { width: 130px; height: 40px; }
.search { width: 558px; height: 46px; margin-left: 17px; border: 2px solid #909090; border-radius: 23px; background: linear-gradient(#f3f3f3, #fff 30%); display: flex; align-items: center; padding-left: 12px; flex: none; font-size: 25.500px; color: #666; }
.g32 { width: 32px; height: 32px; flex: none; }
.tri { width: 14px; height: 8px; margin: 0 8px 0 4px; }
.search span { flex: 1; line-height: 40px; }
.mag { width: 28px; height: 28px; margin-right: 12px; }
.tool { width: 56px; height: 44px; margin-left: 15px; border: 2px solid #7c7c7c; border-radius: 8px; background: linear-gradient(#ececec, #c0c0c0); flex: none; overflow: hidden; }
.tool svg { height: 44px; width: calc(100% + 4px); margin: -2px; }
.tool + .tool { margin-left: 16px; }
.tool.book { width: 76px; }
.tool.monkey { width: 101px; margin-left: 18px; }
.tool.last { margin-left: 20px; }
.bookmarks { height: 45px; flex: none; display: flex; align-items: center; padding: 0 0 5px 24px; background: #b1b1b1; border-bottom: 3px solid #4d4d4d; font-size: 23px; color: #222; text-shadow: 0 1px 0 rgba(255, 255, 255, .4); }
.bookmarks b { padding-left: 11px; white-space: nowrap; }
.bk1 { width: 123px; letter-spacing: -.3px; }
.fb { width: 28px; height: 30px; }
.bookmarks .bk2 { width: 257px; padding-left: 14px; }
.bk3 { letter-spacing: -.4px; }
.ffx { width: 30px; height: 30px; }

/* page */
.page { height: 1388px; position: relative; overflow: hidden; font-family: "Liberation Sans", Arial, sans-serif; font-size: 25.6px; color: #16162a; }
.sitenav { position: absolute; left: 0; top: 0; z-index: 2; width: 664px; height: 67px; padding: 0 0 0 42px; display: flex; align-items: center; background: linear-gradient(#36404e, #171628 75%); border-radius: 0 0 56px 0 / 0 0 64px 0; box-shadow: 0 3px 10px rgba(0, 0, 20, .7); color: #e6e6e6; font-size: 30.4px; }
.sitenav i { width: 23px; height: 22px; background: #e6e6e6; clip-path: polygon(0 0, 100% 0, 50% 100%); margin: 0 13px 0 16px; }
.card { float: right; width: 656px; height: 302px; margin: 11px 31px 0 0; border-radius: 14px; background: #fcfcfc; box-shadow: 2px 3px 7px rgba(60, 60, 80, .55); font-size: 20.6px; }
.caption { height: 52px; padding-top: 25px; text-align: center; line-height: 24px; font-size: 21.5px; color: #85838c; }
.card table { width: 656px; table-layout: fixed; border-collapse: separate; border-spacing: 0; border-radius: 14px; overflow: hidden; background: #9a9ca4; color: #ecf2ea; }
.c1 { width: 135px; } .c2 { width: 134px; } .c3 { width: 106px; } .c4 { width: 130px; } .c5 { width: 151px; }
.card th { height: 39px; padding: 0 4px 0 0; background: #88868f; border-right: 2px solid #9a9ca4; }
.card td { height: 36.5px; padding: 1px 0 0 10px; border-right: 2px solid #bfbfbf; border-bottom: 2px solid #bfbfbf; }
.card td.n { text-align: right; padding-right: 14px; padding-left: 0; }
.card th:last-child, .card td.more { border: 0; }
.card td.more { height: 34px; }
.answers { margin-left: 573px; width: 402px; height: 518px; margin-top: -7px; border-left: 6px solid #20fa2e; }
.chosen { width: 396px; height: 189px; padding-left: 18px; background: #20fa2e; border-radius: 0 0 24px 24px; }
.result { border-collapse: collapse; }
.result td { height: 43px; padding: 0 0 0 17px; border: 2px solid #5f875f; background: #f5f5f5; line-height: 28px; }
.two { width: 360px; } .two td:first-child { width: 207px; }
.one { width: 208px; margin: 46px 0 0 18px; }
.one th { height: 50px; padding: 0; border: 2px solid #5f875f; background: #5f875f; color: #fff; font-weight: normal; }
.buttons { display: flex; gap: 6px; margin: 90px 0 0 525px; }
.buttons button { height: 34px; width: 108px; padding: 0; border: 2px solid #9c9c9c; border-radius: 8px; background: linear-gradient(#fff 45%, #ebebeb 50%, #f3f3f3); box-shadow: 0 1px 3px rgba(0, 0, 0, .35); font: 22.500px/30px "Noto Sans", sans-serif; color: #000; }
.buttons .reset { width: 92px; }
.score { margin: 34px 0 0 521px; line-height: 32px; }
.category { margin: 28px 0 0 496px; width: 2336px; height: 65px; border: 2px solid #aaa; border-bottom: 2px solid #e88a0c; box-shadow: inset 0 -2px 0 #aaa; background: #f9f9f9; padding: 0 0 0 10px; display: flex; gap: 14px; align-items: center; color: #3d4654; }
.foot { padding-left: 488px; color: #2f2f33; font-size: 22.6px; }
.foot h2 { margin-top: 138px; line-height: 38px; font-size: 31.8px; color: #000; }
.ad { width: 1457px; height: 181px; margin: 14px 0 0 -1px; border: 2px solid #111; display: flex; background: linear-gradient(90deg, #fff 32%, #c6c6c6 72%); font-family: Lato, sans-serif; }
.brand { width: 757px; padding: 58px 0 0 411px; display: flex; color: #1d2c3a; font-size: 49px; line-height: 51px; }
.cloud { width: 157px; letter-spacing: 4.200px; font-weight: 500; }
.entr { position: relative; width: 131px; height: 53px; border-radius: 3px; background: #f0ab20; color: #fff; text-align: center; font-weight: 800; letter-spacing: 3px; }
.tm { position: absolute; left: 131px; top: -8px; font-size: 8px; line-height: 20px; color: #555; letter-spacing: 0; }
.by { position: absolute; right: 0; top: 53px; font-size: 9.500px; line-height: 12px; color: #444; white-space: nowrap; letter-spacing: 0; }
.cta { width: 292px; height: 71px; margin: 47px 40px 0 0; border-radius: 5px; background: #f2ae45; border-bottom: 6px solid #c98a25; display: flex; align-items: center; gap: 11px; padding: 2px 0 0 26px; color: #fff; font: 300 34.600px/50px Roboto, sans-serif; white-space: nowrap; text-shadow: 1px 2px 1px #9a6a1c; }
.cta svg { width: 31px; height: 32px; filter: drop-shadow(1px 2px 0 #9a6a1c); }
.ribbon { width: 60px; height: 177px; }
.dark { flex: 1; background: #353535; }
.f1 { margin-top: 19px; line-height: 28px; }
.f2 { margin-top: 26px; line-height: 28px; letter-spacing: -.1px; }
.links { margin-top: 33px; line-height: 28px; display: flex; gap: 21px; color: #33383f; }
.about { color: #5d7c96; }
.mw { width: 176px; height: 62px; margin: -36px 0 0 2680px; border: 2px solid #c9c9c9; border-bottom-color: #aaa; border-radius: 6px; background: linear-gradient(#fff, #ebebeb); display: flex; color: #2b7fae; padding: 2px 0 0 4px; }
.mw svg { width: 60px; height: 52px; flex: none; }
.mw div { display: flex; flex-direction: column; padding: 8px 0 0 7px; }
.mw span { font: 500 15px/15px Lato, sans-serif; }
.mw b { font: 800 19.600px/21px Lato, sans-serif; }

/* desktop and dock */
.desktop { height: 152px; flex: none; position: relative; display: flex; }
.backdrop { position: absolute; left: 0; top: -8px; width: 2880px; height: 160px; }
.dock { position: relative; display: flex; margin: 12px 0 0 408px; height: 140px; width: 2072px; flex: none; }
.dock svg { width: 112px; height: 140px; flex: none; }
.dock svg.sep { width: 56px; }
.cN { font: bold 28px "Liberation Sans", sans-serif; fill: #fff; }
.cS { font: bold 25px "Liberation Sans", sans-serif; fill: #222; }
.cE { font: bold 14px "Liberation Sans", sans-serif; fill: #222; }
.cn { font: bold 10px "Liberation Sans", sans-serif; fill: #ddd; }
.jun { font: bold 13px "Liberation Sans", sans-serif; fill: #fff; }
.day { font: bold 46px "Liberation Sans", sans-serif; fill: #1b1b1b; }
.subl { font: bold 50px "Noto Sans", sans-serif; fill: #ff9c2a; }
.term { font: bold 24px "Liberation Mono", monospace; fill: #1fd335; }
.badge { font: bold 20px "Liberation Sans", sans-serif; fill: #fff; }
.trash { position: relative; width: 120px; margin-left: 243px; display: flex; flex-direction: column; align-items: center; color: #fff; font-size: 28px; text-shadow: 0 3px 4px #000, 0 0 3px #000; }
.trash svg { width: 90px; height: 86px; flex: none; }
.trash span { line-height: 36px; margin-top: 1px; }
```
